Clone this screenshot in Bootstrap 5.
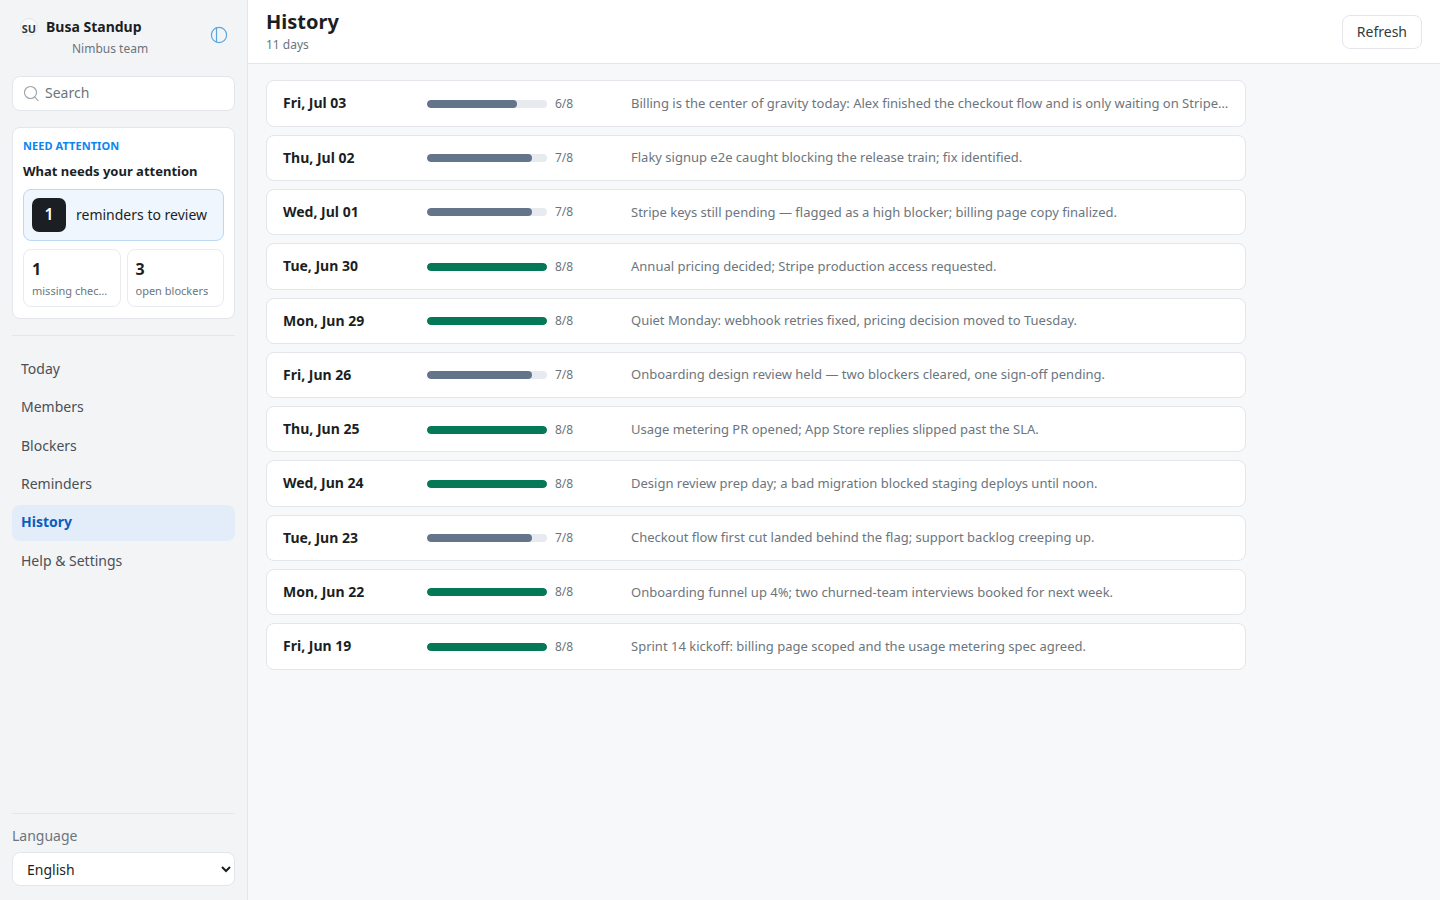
<!DOCTYPE html>
<html lang="en">
<head>
  <meta charset="UTF-8">
  <title>History</title>
  <link href="https://cdn.jsdelivr.net/npm/bootstrap@5.3.0/dist/css/bootstrap.min.css" rel="stylesheet">
  <style>
    html, body { height: 100%; }
    body { font-family: "Noto Sans", sans-serif; background: #f7f8f9; color: #1b1f24; overflow: hidden; }
    .sidebar { width: 248px; height: 900px; background: #f3f4f6; border-right: 1px solid #e3e6ea; padding: 0 12px 14px; }
    .brand { height: 76px; padding: 15px 8px 0 8px; position: relative; }
    .avatar { width: 18px; height: 18px; border-radius: 50%; background: #f8f9fa; border: 1px solid #e3e6ea; font-size: 11px; font-weight: 700; line-height: 19px; text-align: center; margin-right: 8px; color: #343a40; }
    .brand-name { font-size: 14px; font-weight: 700; line-height: 24px; }
    .brand-team { font-size: 12px; color: #6c757d; line-height: 18px; margin-top: 1px; padding-left: 52px; }
    .theme-icon { position: absolute; right: 7px; top: 25.5px; }
    .search { height: 35px; background: #fff; border: 1px solid #e3e6ea; border-radius: 8px; padding: 0 0 2px 10px; font-size: 14px; color: #6c757d; gap: 5px; }
    .search svg { margin-top: 3px; }
    .attention { background: #fff; border: 1px solid #e3e6ea; border-radius: 8px; margin-top: 16px; padding: 10px; height: 192px; }
    .eyebrow { font-size: 11px; font-weight: 700; color: #0d85f0; line-height: 16px; letter-spacing: .006em; }
    .attention h6 { font-size: 13px; font-weight: 700; line-height: 18px; margin: 8px 0 9px; }
    .review { height: 52px; background: #eff6fe; border: 1px solid #bcd8f3; border-radius: 8px; padding: 0 8px 1px; gap: 10px; font-size: 14px; }
    .review-num { width: 34px; height: 34px; background: #1b1f24; color: #fff; border-radius: 7px; font-size: 16px; font-weight: 600; padding-bottom: 2px; }
    .stats { gap: 6px; }
    .stat { flex: 1 1 0; min-width: 0; height: 58px; border: 1px solid #e9ebee; border-radius: 8px; padding: 7px 8px; }
    .stat b { display: block; font-size: 16px; font-weight: 700; line-height: 24px; margin-bottom: 2px; }
    .stat span { display: block; font-size: 11px; color: #6c757d; line-height: 16px; white-space: nowrap; overflow: hidden; text-overflow: ellipsis; }
    .side-rule { border-top: 1px solid #e3e6ea; }
    .side-nav { gap: 2px; }
    .side-nav a { height: 36.3px; padding: 0 9px 3px; border-radius: 8px; color: #495057; font-size: 14px; text-decoration: none; display: flex; align-items: center; }
    .side-nav a.active { background: #e3edf9; color: #0b5cc0; font-weight: 700; }
    .lang-label { font-size: 14px; color: #6c757d; line-height: 21px; margin-bottom: 6px; }
    .lang { height: 34px; font-size: 14px; border: 1px solid #e3e6ea; border-radius: 8px; background-color: #fff; padding: 0 10px; color: #1b1f24; width: 100%; }
    .lang-rule { margin-bottom: 11px; }
    .topbar { height: 64px; background: #fff; border-bottom: 1px solid #e3e6ea; padding: 0 18px; }
    .topbar h1 { font-size: 20px; font-weight: 700; line-height: 24px; margin: 0; }
    .topbar small { font-size: 12px; color: #6c757d; line-height: 18px; display: block; margin-top: 2px; }
    .btn-refresh { height: 34px; padding: 0 14px; font-size: 14px; border: 1px solid #e3e6ea; border-radius: 8px; background: #fff; color: #343a40; }
    .rows { padding: 16.35px 18px; width: 1016px; gap: 8px; }
    .day { height: 46.3px; background: #fff; border: 1px solid #e3e6ea; border-radius: 8px; padding: 0 16px; }
    .day-date { width: 144px; font-size: 14px; font-weight: 700; flex: none; margin-top: -1.2px; }
    .track { width: 120px; height: 8px; background: #e7eaee; border-radius: 4px; flex: none; overflow: hidden; margin-top: .5px; }
    .track div { height: 100%; border-radius: 4px; background: #64748b; }
    .track div.full { background: #047857; }
    .score { width: 84px; padding-left: 8px; font-size: 12px; color: #6c757d; flex: none; margin-top: .5px; }
    .summary { font-size: 13px; color: #6c757d; min-width: 0; white-space: nowrap; overflow: hidden; text-overflow: ellipsis; padding-top: .4px; }
  </style>
</head>
<body>
  <div class="d-flex">
    <aside class="sidebar d-flex flex-column flex-shrink-0">
      <div class="brand">
        <div class="d-flex align-items-center">
          <span class="avatar flex-shrink-0">SU</span>
          <span class="brand-name">Busa Standup</span>
        </div>
        <div class="brand-team">Nimbus team</div>
        <svg class="theme-icon" width="18" height="18" viewBox="0 0 18 18" fill="none" stroke="#5aa5e0" stroke-width="1.2"><circle cx="9" cy="9" r="7.6"/><path d="M6.5 1.8v14.4"/></svg>
      </div>
      <div class="search d-flex align-items-center">
        <svg width="17" height="18" viewBox="0 0 17 18" fill="none" stroke="#9aa1a8" stroke-width="1.1"><circle cx="7.5" cy="7.5" r="6"/><path d="M11.8 12l3.7 4"/></svg>
        Search
      </div>
      <section class="attention">
        <div class="eyebrow">NEED ATTENTION</div>
        <h6>What needs your attention</h6>
        <div class="review d-flex align-items-center">
          <span class="review-num d-flex align-items-center justify-content-center">1</span>
          reminders to review
        </div>
        <div class="stats d-flex mt-2">
          <div class="stat"><b>1</b><span>missing check-ins</span></div>
          <div class="stat"><b>3</b><span>open blockers</span></div>
        </div>
      </section>
      <div class="side-rule mt-3"></div>
      <nav class="side-nav d-flex flex-column mt-3">
        <a href="#">Today</a>
        <a href="#">Members</a>
        <a href="#">Blockers</a>
        <a href="#">Reminders</a>
        <a href="#" class="active">History</a>
        <a href="#">Help &amp; Settings</a>
      </nav>
      <div class="mt-auto">
        <div class="side-rule lang-rule"></div>
        <label class="lang-label d-block" for="lang">Language</label>
        <select id="lang" class="lang"><option>English</option></select>
      </div>
    </aside>
    <main class="flex-grow-1">
      <header class="topbar d-flex align-items-center justify-content-between">
        <div>
          <h1>History</h1>
          <small>11 days</small>
        </div>
        <button class="btn btn-refresh" type="button">Refresh</button>
      </header>
      <div class="rows d-flex flex-column">
        <div class="day d-flex align-items-center"><div class="day-date">Fri, Jul 03</div><div class="track"><div style="width:75%"></div></div><div class="score">6/8</div><div class="summary">Billing is the center of gravity today: Alex finished the checkout flow and is only waiting on Stripe keys before the release train can leave.</div></div>
        <div class="day d-flex align-items-center"><div class="day-date">Thu, Jul 02</div><div class="track"><div style="width:87.5%"></div></div><div class="score">7/8</div><div class="summary">Flaky signup e2e caught blocking the release train; fix identified.</div></div>
        <div class="day d-flex align-items-center"><div class="day-date">Wed, Jul 01</div><div class="track"><div style="width:87.5%"></div></div><div class="score">7/8</div><div class="summary">Stripe keys still pending — flagged as a high blocker; billing page copy finalized.</div></div>
        <div class="day d-flex align-items-center"><div class="day-date">Tue, Jun 30</div><div class="track"><div class="full" style="width:100%"></div></div><div class="score">8/8</div><div class="summary">Annual pricing decided; Stripe production access requested.</div></div>
        <div class="day d-flex align-items-center"><div class="day-date">Mon, Jun 29</div><div class="track"><div class="full" style="width:100%"></div></div><div class="score">8/8</div><div class="summary">Quiet Monday: webhook retries fixed, pricing decision moved to Tuesday.</div></div>
        <div class="day d-flex align-items-center"><div class="day-date">Fri, Jun 26</div><div class="track"><div style="width:87.5%"></div></div><div class="score">7/8</div><div class="summary">Onboarding design review held — two blockers cleared, one sign-off pending.</div></div>
        <div class="day d-flex align-items-center"><div class="day-date">Thu, Jun 25</div><div class="track"><div class="full" style="width:100%"></div></div><div class="score">8/8</div><div class="summary">Usage metering PR opened; App Store replies slipped past the SLA.</div></div>
        <div class="day d-flex align-items-center"><div class="day-date">Wed, Jun 24</div><div class="track"><div class="full" style="width:100%"></div></div><div class="score">8/8</div><div class="summary">Design review prep day; a bad migration blocked staging deploys until noon.</div></div>
        <div class="day d-flex align-items-center"><div class="day-date">Tue, Jun 23</div><div class="track"><div style="width:87.5%"></div></div><div class="score">7/8</div><div class="summary">Checkout flow first cut landed behind the flag; support backlog creeping up.</div></div>
        <div class="day d-flex align-items-center"><div class="day-date">Mon, Jun 22</div><div class="track"><div class="full" style="width:100%"></div></div><div class="score">8/8</div><div class="summary">Onboarding funnel up 4%; two churned-team interviews booked for next week.</div></div>
        <div class="day d-flex align-items-center"><div class="day-date">Fri, Jun 19</div><div class="track"><div class="full" style="width:100%"></div></div><div class="score">8/8</div><div class="summary">Sprint 14 kickoff: billing page scoped and the usage metering spec agreed.</div></div>
      </div>
    </main>
  </div>
</body>
</html>
